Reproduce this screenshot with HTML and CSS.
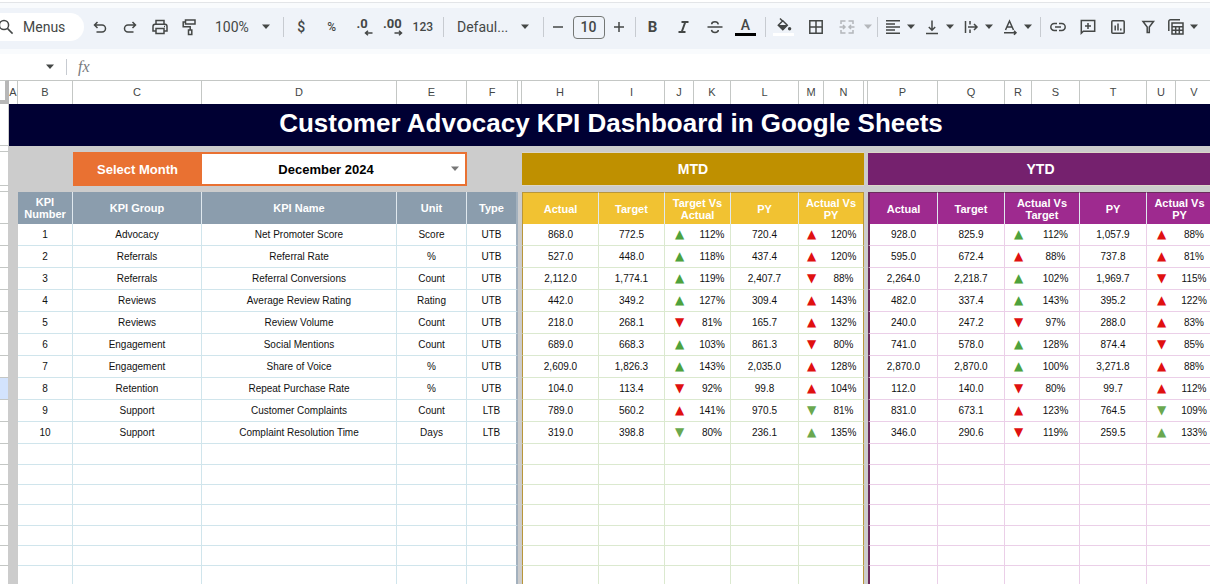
FILE: index.html
```html
<!DOCTYPE html>
<html lang="en">
<head>
<meta charset="utf-8">
<title>Customer Advocacy KPI Dashboard</title>
<link rel="stylesheet" href="styles.css">
</head>
<body>
<svg class="defs" aria-hidden="true">
  <symbol id="caret" viewBox="0 0 10 6"><path d="M1 .5h8L5 5z" fill="currentColor"/></symbol>
</svg>

<header class="toolbar" role="toolbar" aria-label="Main toolbar">
  <label class="menus">
    <svg class="icon" viewBox="0 0 18 18"><circle cx="7" cy="7" r="4.6"/><path d="M10.4 10.4l5.2 5.2"/></svg>
    <input type="text" value="Menus" aria-label="Search the menus">
  </label>
  <div class="group history">
    <button aria-label="Undo"><svg class="icon" viewBox="0 0 18 18"><path d="M6.500 4L3.500 7l3 3M3.500 7h7.500a3.500 3.500 0 0 1 0 7H5.500"/></svg></button>
    <button aria-label="Redo"><svg class="icon" viewBox="0 0 18 18"><path d="M11.500 4l3 3-3 3M14.500 7H7a3.500 3.500 0 0 0 0 7h5.500"/></svg></button>
    <button aria-label="Print"><svg class="icon" viewBox="0 0 18 18"><path d="M5 6V2.500h8V6M4.500 13H2V8.500A2.200 2.200 0 0 1 4 6.300h10a2.200 2.200 0 0 1 2 2.200V13h-2.500M5 10.500h8v5H5z"/><path d="M13 8.500h1"/></svg></button>
    <button aria-label="Paint format"><svg class="icon" viewBox="0 0 18 18"><path d="M4.500 2H14v4H4.500zM4.500 4H2.200v4.800h7V12M7.500 12h3.300v4.500H7.500z"/></svg></button>
  </div>
  <label class="picker zoom">
    <select aria-label="Zoom"><option>100%</option></select>
    <svg class="caret"><use href="#caret"/></svg>
  </label>
  <div class="group numbers">
    <button aria-label="Currency">$</button>
    <button class="small" aria-label="Percent">%</button>
    <button class="decimal" aria-label="Decrease decimal places"><span>.0</span><svg class="step" viewBox="0 0 9 6"><path d="M8.500 3H1.500M4 .700L1.500 3 4 5.300"/></svg></button>
    <button class="decimal" aria-label="Increase decimal places"><span>.00</span><svg class="step" viewBox="0 0 9 6"><path d="M.5 3h7M5 .700L7.500 3 5 5.300"/></svg></button>
    <button class="small" aria-label="More formats">123</button>
  </div>
  <label class="picker font">
    <select aria-label="Font"><option>Defaul...</option></select>
    <svg class="caret"><use href="#caret"/></svg>
  </label>
  <div class="group size">
    <button aria-label="Decrease font size"><svg class="icon" viewBox="0 0 18 18"><path d="M4 9h10"/></svg></button>
    <input type="text" value="10" aria-label="Font size">
    <button aria-label="Increase font size"><svg class="icon" viewBox="0 0 18 18"><path d="M4 9h10M9 4v10"/></svg></button>
  </div>
  <div class="group style">
    <button class="bold" aria-label="Bold">B</button>
    <button aria-label="Italic"><svg class="icon heavy" viewBox="0 0 18 18"><path d="M6.500 4h7M3.500 14h7M10.300 4L6.700 14"/></svg></button>
    <button aria-label="Strikethrough"><svg class="icon" viewBox="0 0 18 18"><path d="M1.500 9h15M12.300 6.300C12 4.600 10.800 3.700 9 3.700c-2 0-3.300 1-3.300 2.500M5.500 11.800c.3 1.700 1.600 2.600 3.500 2.600s3.300-.9 3.300-2.400"/></svg></button>
    <button class="inked" aria-label="Text color"><span>A</span><i class="ink black"></i></button>
  </div>
  <div class="group cells">
    <button class="inked" aria-label="Fill color"><svg class="bucket" viewBox="0 0 16 14"><path d="M4 .5l2.200 2.200M6.800 2.800l4.500 4.500-4.500 4.500-4.500-4.500z" fill="none" stroke="currentColor" stroke-width="1.500"/><path d="M2 7h9.600l-4.800 5z" fill="currentColor"/><circle cx="13.600" cy="10.800" r="1.700" fill="currentColor"/></svg><i class="ink white"></i></button>
    <button aria-label="Borders"><svg class="icon" viewBox="0 0 18 18"><path d="M2.800 2.800h12.400v12.400H2.800zM9 2.800v12.400M2.800 9h12.400"/></svg></button>
    <button class="off" aria-label="Merge cells" disabled><svg class="icon" viewBox="0 0 18 18"><path d="M7.500 3H3v3M10.500 3H15v3M7.500 15H3v-3M10.500 15H15v-3M1.500 9H7M5 7l2 2-2 2M16.500 9H11M13 7l-2 2 2 2"/></svg></button>
    <svg class="caret off"><use href="#caret"/></svg>
  </div>
  <div class="group combos">
    <button aria-label="Horizontal align"><svg class="icon" viewBox="0 0 18 18"><path d="M2 2.800h14M2 5.900h9M2 9h14M2 12.100h9M2 15.200h14"/></svg><svg class="caret"><use href="#caret"/></svg></button>
    <button aria-label="Vertical align"><svg class="icon" viewBox="0 0 18 18"><path d="M9 2.500V12M5.800 9L9 12.200 12.200 9M3 15.500h12"/></svg><svg class="caret"><use href="#caret"/></svg></button>
    <button aria-label="Text wrapping"><svg class="icon" viewBox="0 0 18 18"><path d="M3.500 3v12M8 3v3.500M8 11.500V15M6 9h9M12 6l3 3-3 3"/></svg><svg class="caret"><use href="#caret"/></svg></button>
    <button aria-label="Text rotation"><svg class="icon" viewBox="0 0 18 18"><path d="M4.500 12L8.500 3l4 9M6 9h5M3 14.800h12M13 12.800l2 2-2 2"/></svg><svg class="caret"><use href="#caret"/></svg></button>
  </div>
  <div class="group inserts">
    <button aria-label="Insert link"><svg class="icon" viewBox="0 0 18 18"><path d="M8 5.500H5.300a3.500 3.500 0 0 0 0 7H8M10 5.500h2.700a3.500 3.500 0 0 1 0 7H10M6 9h6"/></svg></button>
    <button aria-label="Insert comment"><svg class="icon" viewBox="0 0 18 18"><path d="M2.300 15.300V2.500h13.400v10.800H4.300zM9 5v6M6 8h6"/></svg></button>
    <button aria-label="Insert chart"><svg class="icon" viewBox="0 0 18 18"><rect x="2.800" y="2.800" width="12.400" height="12.400" rx="1"/><path d="M6.200 7.500v5M9 5.500v7M11.800 10.500v2"/></svg></button>
    <button aria-label="Create a filter"><svg class="icon" viewBox="0 0 18 18"><path d="M4 3.500h10.500L10.300 9v5.500H8.200V9z"/></svg></button>
    <button class="views" aria-label="Filter views"><svg class="icon" viewBox="0 0 18 18"><path d="M1.800 13V3.500A1.700 1.700 0 0 1 3.500 1.800H13M5 5h11v11H5zM5 8.700h11M5 12.300h11M8.700 8.700V16M12.300 8.700V16"/></svg><svg class="caret"><use href="#caret"/></svg></button>
  </div>
</header>

<div class="formula">
  <button class="namebox" aria-label="Named ranges"><svg class="caret"><use href="#caret"/></svg></button>
  <label class="fx" for="fx">fx</label>
  <input id="fx" type="text">
</div>

<main class="sheet">
  <table>
    <colgroup>
      <col class="c-row"><col class="c-a"><col class="c-b"><col class="c-c"><col class="c-d"><col class="c-e"><col class="c-f"><col class="c-g">
      <col class="c-h"><col class="c-i"><col class="c-j"><col class="c-k"><col class="c-l"><col class="c-m"><col class="c-n"><col class="c-o">
      <col class="c-p"><col class="c-q"><col class="c-r"><col class="c-s"><col class="c-t"><col class="c-u"><col class="c-v">
    </colgroup>
    <thead>
      <tr class="letters">
        <td class="corner"></td><th>A</th><th>B</th><th>C</th><th>D</th><th>E</th><th>F</th><th></th>
        <th>H</th><th>I</th><th>J</th><th>K</th><th>L</th><th>M</th><th>N</th><th></th>
        <th>P</th><th>Q</th><th>R</th><th>S</th><th>T</th><th>U</th><th>V</th>
      </tr>
    </thead>
    <tbody id="grid">
      <tr class="title"><td class="rowhead"></td><th colspan="22"><h1>Customer Advocacy KPI Dashboard in Google Sheets</h1></th></tr>
      <tr class="gap"><td class="rowhead"></td><td colspan="22"></td></tr>
      <tr class="bands">
        <td class="rowhead"></td><td colspan="2"></td>
        <th class="month-label"><label for="month">Select Month</label></th>
        <td class="month" colspan="2"><div class="month-box"><select id="month"><option>December 2024</option></select><svg class="caret"><use href="#caret"/></svg></div></td>
        <td colspan="2"></td><th class="band mtd" colspan="7">MTD</th><td></td><th class="band ytd" colspan="7">YTD</th>
      </tr>
      <tr class="gap"><td class="rowhead"></td><td colspan="22"></td></tr>
      <tr class="heads">
        <td class="rowhead"></td><td></td>
        <th class="kpi">KPI Number</th><th class="kpi">KPI Group</th><th class="kpi">KPI Name</th><th class="kpi">Unit</th><th class="kpi end">Type</th><td></td>
        <th class="mtd start">Actual</th><th class="mtd">Target</th><th class="mtd" colspan="2">Target Vs Actual</th><th class="mtd">PY</th><th class="mtd end" colspan="2">Actual Vs<br>PY</th><td></td>
        <th class="ytd start">Actual</th><th class="ytd">Target</th><th class="ytd" colspan="2">Actual Vs Target</th><th class="ytd">PY</th><th class="ytd" colspan="2">Actual Vs<br>PY</th>
      </tr>
    </tbody>
  </table>
</main>
<script src="app.js"></script>
</body>
</html>
```

FILE: app.js
```js
// Arrow codes: first letter is the direction (u/d), second the colour (g green, r red, s soft green).
const rows = [
  ["1|Advocacy|Net Promoter Score|Score|UTB", "868.0|772.5|ug|112%|720.4|ur|120%", "928.0|825.9|ug|112%|1,057.9|ur|88%"],
  ["2|Referrals|Referral Rate|%|UTB", "527.0|448.0|ug|118%|437.4|ur|120%", "595.0|672.4|ur|88%|737.8|ur|81%"],
  ["3|Referrals|Referral Conversions|Count|UTB", "2,112.0|1,774.1|ug|119%|2,407.7|dr|88%", "2,264.0|2,218.7|ug|102%|1,969.7|dr|115%"],
  ["4|Reviews|Average Review Rating|Rating|UTB", "442.0|349.2|ug|127%|309.4|ur|143%", "482.0|337.4|ug|143%|395.2|ur|122%"],
  ["5|Reviews|Review Volume|Count|UTB", "218.0|268.1|dr|81%|165.7|ur|132%", "240.0|247.2|dr|97%|288.0|ur|83%"],
  ["6|Engagement|Social Mentions|Count|UTB", "689.0|668.3|ug|103%|861.3|dr|80%", "741.0|578.0|ug|128%|874.4|dr|85%"],
  ["7|Engagement|Share of Voice|%|UTB", "2,609.0|1,826.3|ug|143%|2,035.0|ur|128%", "2,870.0|2,870.0|ug|100%|3,271.8|ur|88%"],
  ["8|Retention|Repeat Purchase Rate|%|UTB", "104.0|113.4|dr|92%|99.8|ur|104%", "112.0|140.0|dr|80%|99.7|ur|112%"],
  ["9|Support|Customer Complaints|Count|LTB", "789.0|560.2|ur|141%|970.5|ds|81%", "831.0|673.1|ur|123%|764.5|ds|109%"],
  ["10|Support|Complaint Resolution Time|Days|LTB", "319.0|398.8|ds|80%|236.1|us|135%", "346.0|290.6|dr|119%|259.5|us|133%"]
];
const blank = ["||||", "||||||", "||||||"];
const groups = ["kpi", "mtd", "ytd"];
const arrows = { u: "▲", d: "▼" };
const tones = { g: "green", r: "red", s: "soft" };
const grid = document.getElementById("grid");

function cell(text, group, index, last) {
  const td = document.createElement("td");
  td.className = group;
  if (index === 0) td.classList.add("start");
  if (last) td.classList.add("end");
  if (group !== "kpi" && (index === 2 || index === 5)) {
    td.classList.add("arrow");
    if (text) {
      td.classList.add(tones[text[1]]);
      text = arrows[text[0]];
    }
  }
  td.textContent = text;
  return td;
}

function addRow(parts, className) {
  const tr = document.createElement("tr");
  tr.className = className;
  tr.insertCell().className = "rowhead";
  parts.forEach((part, g) => {
    tr.insertCell();
    const values = part.split("|");
    values.forEach((v, i) => tr.append(cell(v, groups[g], i, i === values.length - 1)));
  });
  grid.append(tr);
}

rows.forEach((r, i) => addRow(r, i === 7 ? "data selected" : "data"));
for (let i = 0; i < 8; i++) addRow(blank, i % 3 ? "blank" : "blank tall");
```

FILE: styles.css
```css
* { box-sizing: border-box; }

body {
  margin: 0;
  height: 100vh;
  display: flex;
  flex-direction: column;
  overflow: hidden;
  background: #fff;
  color: #444746;
  font-family: "Liberation Sans", Arial, sans-serif;
}

button, input, select {
  margin: 0;
  padding: 0;
  border: 0;
  background: none;
  color: inherit;
  font: inherit;
  appearance: none;
}

.defs { position: absolute; width: 0; height: 0; }

.icon {
  flex: none;
  width: 18px;
  height: 18px;
  fill: none;
  stroke: currentColor;
  stroke-width: 1.5;
}
.icon.heavy { stroke-width: 2; }
.caret { flex: none; width: 10px; height: 6px; }
.off { color: #b4b7bb; }

/* Toolbar */
.toolbar {
  flex: none;
  display: flex;
  align-items: center;
  height: 52px;
  margin-top: 2px;
  padding-top: 2px;
  border-top: 1px solid #e3e5e8;
  border-bottom: 5px solid #f9fbfd;
  background: linear-gradient(#f9fbfd 5px, #eff3f9 5px);
  font: 500 14px Roboto, sans-serif;
  overflow: hidden;
}
.toolbar button {
  display: flex;
  align-items: center;
  justify-content: center;
  height: 30px;
}
.menus {
  flex: none;
  display: flex;
  align-items: center;
  gap: 8px;
  width: 84px;
  height: 28px;
  margin-right: 1px;
  border-radius: 0 14px 14px 0;
  background: #fff;
  font-weight: 400;
}
.menus .icon { margin-left: -3px; }
.menus input { width: 50px; }

.group, .picker { flex: none; display: flex; align-items: center; height: 20px; }
.group > button { flex: 1; }
.group + .group, .picker + .group, .group + .picker.font { border-left: 1px solid #c7cbd1; }

.history { width: 120px; }
.zoom { width: 78px; padding-left: 10px; gap: 8px; font-weight: 400; }
.zoom select { width: 38px; }
.numbers { width: 160px; padding: 0 5px 0 2px; }
.small { font-size: 12px; }
.decimal { flex-direction: column; }
.decimal span { font-size: 13px; font-weight: 700; line-height: 12px; }
.decimal .step {
  width: 9px;
  height: 6px;
  margin-left: 12px;
  fill: none;
  stroke: currentColor;
  stroke-width: 1.5;
}
.font { width: 100px; padding-left: 13px; gap: 9px; font-weight: 400; }
.font select { width: 54px; }
.size { width: 92px; padding: 0 2px 0 0; }
.size input {
  width: 32px;
  height: 23px;
  border: 1px solid #747775;
  border-radius: 4px;
  text-align: center;
}
.style { width: 130px; padding: 0 4px 0 1px; }
.bold { font-weight: 700; font-size: 15px; }
.inked { flex-direction: column; gap: 1px; }
.inked span { line-height: 14px; }
.ink { width: 21px; height: 3px; }
.ink.black { background: #000; }
.ink.white { background: #fff; }
.bucket { width: 16px; height: 14px; }
.cells { width: 112px; padding: 0 4px 0 2px; }
.combos { width: 163px; padding-left: 6px; }
.combos button { justify-content: flex-start; gap: 4px; }
.inserts { flex: 1; padding-left: 2px; }
.inserts > button { flex: none; width: 30px; }
.inserts > .views { width: 40px; gap: 4px; }

/* Formula bar */
.formula {
  flex: none;
  display: flex;
  align-items: center;
  height: 26px;
}
.namebox {
  display: flex;
  align-items: center;
  justify-content: flex-end;
  width: 67px;
  height: 16px;
  padding-right: 11px;
  border-right: 1px solid #c7cbd1;
}
.fx { padding: 0 11px; font: italic 16px "Liberation Serif", serif; color: #777a7d; }
.formula input { flex: 1; height: 20px; }

/* Sheet */
.sheet { flex: 1; min-height: 0; overflow: hidden; }

table {
  width: 100%;
  min-width: 1213px;
  table-layout: fixed;
  border-spacing: 0;
  background: #ccc;
  color: #111;
  font-size: 10px;
  line-height: 12px;
}
td, th { padding: 0; text-align: center; overflow: hidden; }

.c-row, .c-a { width: 9px; }
.c-b { width: 55px; }
.c-c { width: 129px; }
.c-d { width: 195px; }
.c-e { width: 70px; }
.c-f { width: 51px; }
.c-g { width: 4px; }
.c-h { width: 77px; }
.c-i { width: 66px; }
.c-j { width: 29px; }
.c-k { width: 37px; }
.c-l { width: 68px; }
.c-m { width: 25px; }
.c-n { width: 40px; }
.c-o { width: 4px; }
.c-p { width: 70px; }
.c-q { width: 67px; }
.c-r { width: 27px; }
.c-s { width: 48px; }
.c-t { width: 67px; }
.c-u { width: 29px; }
.c-v { width: 37px; }

.letters { height: 24px; }
.letters > * {
  padding-bottom: 2px;
  border-top: 1px solid #c4c7c5;
  border-right: 1px solid #c4c7c5;
  background: #fff;
  color: #444746;
  font: 400 11px "Liberation Sans", sans-serif;
}
.letters .corner { border-right: 4px solid #b7b7b7; border-bottom: 4px solid #b7b7b7; }

.rowhead { background: #fff; border-bottom: 1px solid #c4c7c5; border-right: 1px solid #ccc; }
.selected .rowhead { background: #d3e3fd; }

.title { height: 42px; }
.title th { background: #000033; color: #fff; }
h1 { margin: 0 0 5px; font-size: 26px; line-height: 30px; }

.gap { height: 6px; line-height: 0; }

.bands { height: 34px; font-size: 13px; }
.month-label { padding-top: 1px; background: #e97132; color: #fff; }
.month { border: 2px solid #e97132; border-left: 0; background: #fff; }
.month-box { display: flex; align-items: center; padding-right: 5px; color: #777; }
.month-box select {
  flex: 1;
  height: 28px;
  padding-top: 1px;
  color: #000;
  font-weight: 700;
  text-align-last: center;
}
.band { border: solid #dcd6c8; border-width: 1px 0; color: #fff; font-size: 14px; }
.band.mtd { background: #bf9000; }
.band.ytd { background: #75216e; }

.heads { height: 32px; font-size: 11px; }
.heads th { border-right: 1px solid #dfe8ee; color: #fff; }
.heads .kpi { background: #8b9dad; }
.heads .mtd { background: #f1c232; border-top: 1px solid #b8963a; }
.heads .ytd { background: #9e2a8f; border-top: 1px solid #6b2a5c; }

.data { height: 22px; }
.blank { height: 20px; }
.blank.tall { height: 21px; }
.data .kpi, .data .mtd, .data .ytd,
.blank .kpi, .blank .mtd, .blank .ytd { background: #fff; border-style: solid; border-width: 0 1px 1px 0; }
.data .kpi, .blank .kpi { border-color: #d0e5ec; }
.data .mtd, .blank .mtd { border-color: #dbe9cf; }
.data .ytd, .blank .ytd { border-color: #ebcfe8; }
.data .arrow, .blank .arrow { border-right-width: 0; }

#grid tr .kpi.end { border-right: 2px solid #a3b1be; }
#grid tr:not(.bands) .mtd.start { border-left: 1px solid #b8963a; }
#grid tr:not(.bands) .mtd.end { border-right: 1px solid #b8963a; }
#grid tr:not(.bands) .ytd.start { border-left: 2px solid #6b2a5c; }

.arrow { font-family: "DejaVu Sans", sans-serif; font-size: 12px; line-height: 10px; }
.data .arrow { padding-bottom: 2px; }
.green { color: #4ea23c; }
.red { color: #e01010; }
.soft { color: #6aa84f; }
```
